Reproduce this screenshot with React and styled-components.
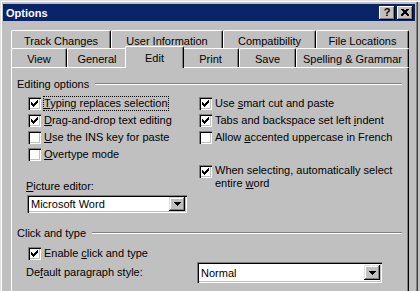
import React from 'react'
import styled, { createGlobalStyle } from 'styled-components'

const Global = createGlobalStyle`
  body {
    margin: 0;
    background: #c0c0c0;
    font-family: "Liberation Sans", Arial, sans-serif;
    font-size: 11px;
    color: #000;
  }
`

const Window = styled.div`
  box-sizing: border-box;
  width: 420px;
  height: 291px;
  padding: 4px 5px 0 3px;
  background: #c0c0c0;
  box-shadow: inset 1px 1px #dfdfdf, inset 2px 2px #fff,
    inset -2px 0 #c0c0c0, inset -3px 0 #404040, inset -4px 0 #808080;
  overflow: hidden;
`

const TitleBar = styled.div`
  height: 17px;
  background: #0a246a;
  display: flex;
  align-items: center;
  padding: 0 2px 0 3px;
`

const Title = styled.div`
  flex: 1;
  color: #fff;
  font-weight: bold;
  font-size: 11px;
`

const CaptionButton = styled.div`
  box-sizing: border-box;
  width: 16px;
  height: 14px;
  margin-left: 2px;
  background: #c0c0c0;
  box-shadow: inset -1px -1px #000, inset 1px 1px #fff, inset -2px -2px #808080;
  display: flex;
  align-items: center;
  justify-content: center;
  font-weight: bold;
  font-size: 11px;
  line-height: 1;
`

const TabArea = styled.div`
  margin: 9px 0 0 8px;
  width: 398px;
`

const TabRow = styled.div`
  display: flex;
  height: ${p => p.$h}px;
`

const Tab = styled.div`
  box-sizing: border-box;
  width: ${p => p.$w}px;
  height: ${p => (p.$active ? p.$h + 3 : p.$h)}px;
  margin: ${p => (p.$active ? '-2px -2px -1px -2px' : '0')};
  padding-top: ${p => (p.$active ? 1 : 2)}px;
  position: relative;
  z-index: ${p => (p.$active ? 2 : 1)};
  display: flex;
  align-items: center;
  justify-content: center;
  background: #c0c0c0;
  border-top: 1px solid #fff;
  border-left: 1px solid #fff;
  border-right: 1px solid #000;
  border-radius: 2px 2px 0 0;
  box-shadow: inset -1px 0 #808080;
  white-space: nowrap;
`

const Panel = styled.div`
  box-sizing: border-box;
  height: 230px;
  border-top: 1px solid #fff;
  border-left: 1px solid #fff;
  border-right: 1px solid #000;
  box-shadow: inset -1px 0 #808080;
  padding: 9px 6px 0 5px;
`

const GroupHeader = styled.div`
  display: flex;
  align-items: center;
  height: 13px;
  gap: 6px;
  margin-top: ${p => p.$top || 0}px;
`

const Etch = styled.div`
  flex: 1;
  border-top: 1px solid #808080;
  border-bottom: 1px solid #fff;
`

const Columns = styled.div`
  display: flex;
  margin-top: 5px;
  padding-left: 9px;
`

const Column = styled.div`
  display: flex;
  flex-direction: column;
  width: ${p => p.$w}px;
`

const Row = styled.div`
  display: flex;
  align-items: ${p => (p.$multi ? 'flex-start' : 'center')};
  min-height: 17px;
  padding-left: ${p => p.$indent || 2}px;
  margin-top: ${p => p.$top || 0}px;
`

const Box = styled.div`
  box-sizing: border-box;
  width: 13px;
  height: 13px;
  flex: none;
  background: #fff;
  box-shadow: inset 1px 1px #808080, inset 2px 2px #000, inset -1px -1px #fff, inset -2px -2px #c0c0c0;
  margin-top: ${p => (p.$multi ? 2 : 0)}px;
  svg { display: block; }
`

const Label = styled.span`
  margin-left: 3px;
  line-height: 13px;
  padding-top: ${p => (p.$multi ? 1 : 0)}px;
  outline: ${p => (p.$focus ? '1px dotted #000' : 'none')};
  white-space: nowrap;
`

const FieldLabel = styled.div`
  line-height: 13px;
  margin-top: ${p => p.$top || 0}px;
  width: ${p => p.$w || 'auto'};
  flex: none;
`

const Combo = styled.div`
  box-sizing: border-box;
  width: ${p => p.$w}px;
  height: ${p => p.$h}px;
  margin: ${p => p.$m || '0'};
  background: #fff;
  box-shadow: inset 1px 1px #808080, inset 2px 2px #000, inset -1px -1px #fff, inset -2px -2px #c0c0c0;
  display: flex;
  align-items: center;
  padding: 2px;
`

const ComboText = styled.div`
  flex: 1;
  padding-left: 2px;
`

const DropButton = styled.div`
  box-sizing: border-box;
  width: 16px;
  height: ${p => p.$h}px;
  background: #c0c0c0;
  box-shadow: inset -1px -1px #000, inset 1px 1px #dfdfdf, inset -2px -2px #808080, inset 2px 2px #fff;
  display: flex;
  align-items: center;
  justify-content: center;
`

const BottomRow = styled.div`
  display: flex;
  align-items: center;
  padding-left: 9px;
`

const U = styled.span`
  text-decoration: underline;
`

const CheckMark = () => {
  const cols = [2, 3, 4, 3, 2, 1, 0]
  return (
    <svg width="13" height="13" shapeRendering="crispEdges">
      {cols.map((y, i) => (
        <rect key={i} x={3 + i} y={3 + y} width="1" height="3" fill="#000" />
      ))}
    </svg>
  )
}

const Arrow = () => (
  <svg width="7" height="4" shapeRendering="crispEdges">
    <polygon points="0,0 7,0 3.5,4" fill="#000" />
  </svg>
)

const CloseX = () => (
  <svg width="8" height="7" shapeRendering="crispEdges">
    <path d="M0.5 0 L7.5 7 M7.5 0 L0.5 7 M1.5 0 L8 6.5 M6.5 0 L0 6.5" stroke="#000" strokeWidth="1" />
  </svg>
)

const Check = ({ checked, children, focus, multi, indent, top }) => (
  <Row $multi={multi} $indent={indent} $top={top}>
    <Box $multi={multi}>{checked && <CheckMark />}</Box>
    <Label $focus={focus} $multi={multi}>{children}</Label>
  </Row>
)

const backTabs = [
  ['Track Changes', 100],
  ['User Information', 112],
  ['Compatibility', 93],
  ['File Locations', 93],
]

const frontTabs = [
  ['View', 56],
  ['General', 60],
  ['Edit', 59, true],
  ['Print', 57],
  ['Save', 57],
  ['Spelling & Grammar', 113],
]

const App = () => {
  return (
    <>
      <Global />
      <Window>
        <TitleBar>
          <Title>Options</Title>
          <CaptionButton>?</CaptionButton>
          <CaptionButton><CloseX /></CaptionButton>
        </TitleBar>
        <TabArea>
          <TabRow $h={18}>
            {backTabs.map(([name, w]) => (
              <Tab key={name} $w={w} $h={18}>{name}</Tab>
            ))}
          </TabRow>
          <TabRow $h={19}>
            {frontTabs.map(([name, w, active]) => (
              <Tab key={name} $w={w} $h={19} $active={active}>{name}</Tab>
            ))}
          </TabRow>
          <Panel>
            <GroupHeader>
              Editing options
              <Etch />
            </GroupHeader>
            <Columns>
              <Column $w={171}>
                <Check checked focus><U>T</U>yping replaces selection</Check>
                <Check checked><U>D</U>rag-and-drop text editing</Check>
                <Check><U>U</U>se the INS key for paste</Check>
                <Check><U>O</U>vertype mode</Check>
                <FieldLabel $top={17}><U>P</U>icture editor:</FieldLabel>
                <Combo $w={160} $h={18} $m="2px 0 0 1px">
                  <ComboText>Microsoft Word</ComboText>
                  <DropButton $h={14}><Arrow /></DropButton>
                </Combo>
              </Column>
              <Column $w={200}>
                <Check checked>Use <U>s</U>mart cut and paste</Check>
                <Check checked>Tabs and backspace set left <U>i</U>ndent</Check>
                <Check>Allow <U>a</U>ccented uppercase in French</Check>
                <Check checked multi top={17}>
                  When selecting, automatically select<br />entire <U>w</U>ord
                </Check>
              </Column>
            </Columns>
            <GroupHeader $top={13}>
              Click and type
              <Etch />
            </GroupHeader>
            <Check checked indent={11} top={6}>Enable <U>c</U>lick and type</Check>
            <BottomRow>
              <FieldLabel $w="171px">De<U>f</U>ault paragraph style:</FieldLabel>
              <Combo $w={185} $h={21}>
                <ComboText>Normal</ComboText>
                <DropButton $h={15}><Arrow /></DropButton>
              </Combo>
            </BottomRow>
          </Panel>
        </TabArea>
      </Window>
    </>
  )
}

export default App
